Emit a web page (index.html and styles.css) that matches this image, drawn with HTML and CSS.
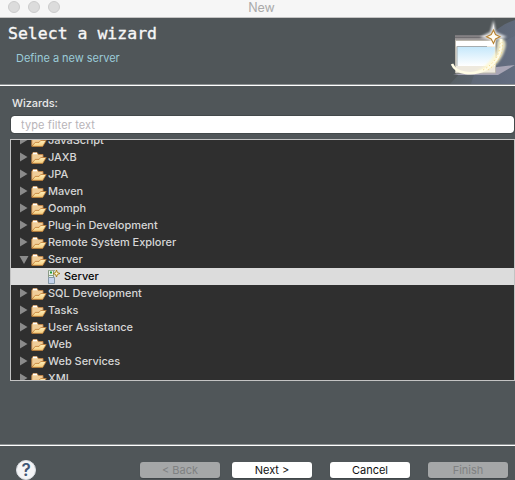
FILE: index.html
```
<!DOCTYPE html>
<html lang="en">
<head>
<meta charset="utf-8">
<title>New</title>
<link rel="stylesheet" href="styles.css">
</head>
<body>
<svg width="0" height="0" class="defs" aria-hidden="true">
  <defs>
    <linearGradient id="fold" x1="0" y1="0" x2="0" y2="1"><stop offset="0" stop-color="#fff0bd"/><stop offset="1" stop-color="#f5cc7c"/></linearGradient>
    <symbol id="folder" viewBox="0 0 16 14">
      <path d="M.8 12V3.5L2 1.5H6L7.5 3.5H12V7" fill="#f0cd98" stroke="#c48747" stroke-width=".9"/>
      <path d="M2 2.5H6" stroke="#fff" stroke-width="1.6"/>
      <path d="M.8 12.4L4.2 8.4H8L9.7 6.5H15.2L11.7 12.4Z" fill="url(#fold)" stroke="#c07c34" stroke-width=".8"/>
    </symbol>
    <symbol id="closed" viewBox="0 0 8 10"><path d="M0 .5L7.5 5L0 9.5Z" fill="#8b8b8b"/></symbol>
    <symbol id="opened" viewBox="0 0 10 8"><path d="M.5 0H9.5L5 8Z" fill="#8b8b8b"/></symbol>
  </defs>
</svg>
<div class="window">
  <div class="titlebar">
    <div class="lights"><i></i><i></i><i></i></div>
    <span>New</span>
  </div>
  <header>
    <div class="heading">
      <h1>Select a wizard</h1>
      <p>Define a new server</p>
    </div>
    <svg class="banner" width="80" height="66" viewBox="435 18 80 66">
      <defs>
        <linearGradient id="sky" x1="0" y1="0" x2="0" y2="1"><stop offset="0" stop-color="#c6e8fb"/><stop offset="1" stop-color="#fff"/></linearGradient>
        <linearGradient id="bar" x1="0" y1="0" x2="0" y2="1"><stop offset="0" stop-color="#777579"/><stop offset="1" stop-color="#aaa5a4"/></linearGradient>
        <linearGradient id="shade" x1="0" y1="0" x2="1" y2="0"><stop offset="0" stop-color="#596268"/><stop offset="1" stop-color="#657087"/></linearGradient>
        <filter id="soft" x="-30%" y="-30%" width="160%" height="160%"><feGaussianBlur stdDeviation="1.2"/></filter>
        <filter id="fine" x="-20%" y="-20%" width="140%" height="140%"><feGaussianBlur stdDeviation=".5"/></filter>
      </defs>
      <path d="M450 84C464 69 478 55 488 39C498 27 506 23 515 20V84Z" fill="url(#shade)" opacity=".75"/>
      <path d="M471 84C475 67 493 45 515 36V84Z" fill="#69738a" opacity=".4"/>
      <path d="M453 75L497 67L515 65L498 75Z" fill="#a8a5b5" filter="url(#fine)"/>
      <path d="M455 35H496V41H455Z" fill="url(#bar)"/>
      <path d="M455 37.5H490" stroke="#6f6c70"/>
      <path d="M455.5 40.5H495.5V73H455.5Z" fill="#eee9de" stroke="#bbb7ad"/>
      <path d="M456 41H495V46H456Z" fill="#fff"/>
      <path d="M457 47H495V66H457Z" fill="url(#sky)"/>
      <path d="M457 66V46.5H487" fill="none" stroke="#a6adb0"/>
      <path d="M497 42C497 56 488 66 475 72C489 73 501 64 505 49C507 43 505 38 500 38Z" fill="#fff8cf" filter="url(#soft)" opacity=".85"/>
      <path d="M452 64C456 74 473 76 486 69C499 61 502 50 501 39" fill="none" stroke="#fffce5" stroke-width="2.6" filter="url(#fine)"/>
      <path d="M483 70C494 64 501 54 500 41M488 70C499 62 504 53 502 42" fill="none" stroke="#f5dc96" stroke-width="1" stroke-dasharray="1.4 2.2"/>
      <path d="M493.5 20L496 32L507 37L496 40L493.5 48L490 40L480 37L490 32Z" fill="#fff" opacity=".8" filter="url(#soft)"/>
      <path d="M493.5 23L495 34H492Z" fill="#fff" opacity=".6"/>
      <path d="M493.5 30L495.5 34.5L500 36.8L495.5 39L493.5 43.5L491.2 39L486.5 36.8L491.2 34.5Z" fill="#fffdf3" stroke="#b78332" stroke-width="1.1"/>
    </svg>
  </header>
  <main>
    <label for="filter">Wizards:</label>
    <input id="filter" type="text" placeholder="type filter text">
    <div class="tree">
      <ul>
        <li><svg class="arrow"><use href="#closed"/></svg><svg class="folder"><use href="#folder"/></svg><span>JavaScript</span></li>
        <li><svg class="arrow"><use href="#closed"/></svg><svg class="folder"><use href="#folder"/></svg><span>JAXB</span></li>
        <li><svg class="arrow"><use href="#closed"/></svg><svg class="folder"><use href="#folder"/></svg><span>JPA</span></li>
        <li><svg class="arrow"><use href="#closed"/></svg><svg class="folder"><use href="#folder"/></svg><span>Maven</span></li>
        <li><svg class="arrow"><use href="#closed"/></svg><svg class="folder"><use href="#folder"/></svg><span>Oomph</span></li>
        <li><svg class="arrow"><use href="#closed"/></svg><svg class="folder"><use href="#folder"/></svg><span>Plug-in Development</span></li>
        <li><svg class="arrow"><use href="#closed"/></svg><svg class="folder"><use href="#folder"/></svg><span>Remote System Explorer</span></li>
        <li><svg class="arrow open"><use href="#opened"/></svg><svg class="folder"><use href="#folder"/></svg><span>Server</span></li>
        <li class="selected">
          <svg class="server" viewBox="0 0 14 16">
            <path d="M1.5 1.5H6.5V14.5H1.5Z" fill="#e8eee9" stroke="#8a9a86"/>
            <path d="M1 1.5H8" stroke="#9aac93"/>
            <path d="M3 3.5H5" stroke="#1d9a35" stroke-width="2"/>
            <path d="M2 6.5H7" stroke="#89a181"/>
            <path d="M1.5 8.5H7.5V14.5H1.5Z" fill="#c4d3ed" stroke="#869aa9"/>
            <path d="M9.5 1L10.4 3.6L13 4.5L10.4 5.4L9.5 8L8.6 5.4L6 4.5L8.6 3.6Z" fill="#fff8cf" stroke="#a37a10" stroke-width=".9"/>
          </svg><span>Server</span></li>
        <li><svg class="arrow"><use href="#closed"/></svg><svg class="folder"><use href="#folder"/></svg><span>SQL Development</span></li>
        <li><svg class="arrow"><use href="#closed"/></svg><svg class="folder"><use href="#folder"/></svg><span>Tasks</span></li>
        <li><svg class="arrow"><use href="#closed"/></svg><svg class="folder"><use href="#folder"/></svg><span>User Assistance</span></li>
        <li><svg class="arrow"><use href="#closed"/></svg><svg class="folder"><use href="#folder"/></svg><span>Web</span></li>
        <li><svg class="arrow"><use href="#closed"/></svg><svg class="folder"><use href="#folder"/></svg><span>Web Services</span></li>
        <li><svg class="arrow"><use href="#closed"/></svg><svg class="folder"><use href="#folder"/></svg><span>XML</span></li>
      </ul>
    </div>
  </main>
  <footer>
    <span class="help">?</span>
    <div class="buttons">
      <button disabled>&lt; Back</button>
      <button class="next">Next &gt;</button>
      <button>Cancel</button>
      <button disabled>Finish</button>
    </div>
  </footer>
</div>
</body>
</html>
```
FILE: styles.css
```
* { box-sizing: border-box; }
body { margin: 0; background: #505659; font: 500 11px/17px Inter, "Liberation Sans", sans-serif; color: #d6d6d6; overflow: hidden; }
.defs { display: block; height: 0; }
.window { width: 515px; height: 480px; display: flex; flex-direction: column; overflow: hidden; }
.titlebar { height: 18px; flex: none; display: grid; grid-template-columns: 1fr auto 1fr; background: #f6f6f6; border-bottom: 1px solid #c4c4c4; color: #aaa; font-size: 12.5px; font-weight: 400; line-height: 15px; padding-left: 8px; }
.lights { display: flex; gap: 8px; padding-top: 1px; }
.lights i { width: 12px; height: 12px; border-radius: 50%; background: #dcdcdc; border: 1px solid #ccc; }
header { height: 68px; flex: none; display: flex; justify-content: space-between; border-bottom: 1px solid #fff; box-shadow: inset 0 -1px #8d9193; }
.heading { padding-left: 8px; }
h1 { margin: 5px 0 0; font: 400 16.5px/22px "DejaVu Sans Mono", monospace; color: #f7f7f7; -webkit-text-stroke: .35px #f7f7f7; }
p { margin: 5px 0 0 8px; color: #9bcbd8; font-weight: 400; line-height: 16px; letter-spacing: -.03px; }
.banner { display: block; }
main { height: 358px; flex: none; padding: 9px 0 0 10px; }
label { display: block; height: 21px; margin-left: 2px; line-height: 17px; letter-spacing: -.05px; color: #e8e8e8; }
input { display: block; width: 503px; height: 17px; margin: 0 0 0 1px; padding: 1px 10px 0; border: 0; border-radius: 3px; background: #fff; font: 400 11px/16px Inter, sans-serif; letter-spacing: .1px; outline: 1px solid #43494b; }
input::placeholder { color: #b8b4b8; opacity: 1; }
.tree { height: 242px; margin-top: 6px; border: 1px solid #c3c3c3; background: #2f2f2f; overflow: hidden; }
ul { margin: -8px 0 0; padding: 0; list-style: none; letter-spacing: -.03px; }
li { display: flex; align-items: center; height: 17px; padding-left: 9px; }
.arrow { width: 8px; height: 10px; margin: -1px 3px 0 0; }
.arrow.open { width: 10px; height: 8px; margin: 0 2px 0 -1px; }
.folder { width: 16px; height: 14px; margin-right: 1px; }
.selected { background: #dcdcdc; color: #050505; padding-left: 36px; }
.server { width: 14px; height: 16px; margin-right: 3px; }
footer { flex: 1; display: flex; align-items: flex-start; justify-content: space-between; border-top: 1px solid #8d9193; box-shadow: inset 0 1px #fff; padding: 16px 7px 0 16px; }
.help { width: 20px; height: 20px; border-radius: 50%; background: #f4f4f6; color: #405574; font-size: 17px; font-weight: 600; line-height: 18px; text-align: center; margin-top: -1px; border: 1px solid #d8dce2; }
.buttons { display: flex; gap: 18px; margin-top: 1px; }
button { width: 80px; height: 16px; padding: 0; border: 0; border-radius: 3px; background: #fff; color: #111; font: 400 11px/16px Inter, sans-serif; box-shadow: 0 1px 1px #3f4548; }
button:disabled { background: #a5a7a8; color: #7f8182; }
.next { margin-left: -6px; }
```
